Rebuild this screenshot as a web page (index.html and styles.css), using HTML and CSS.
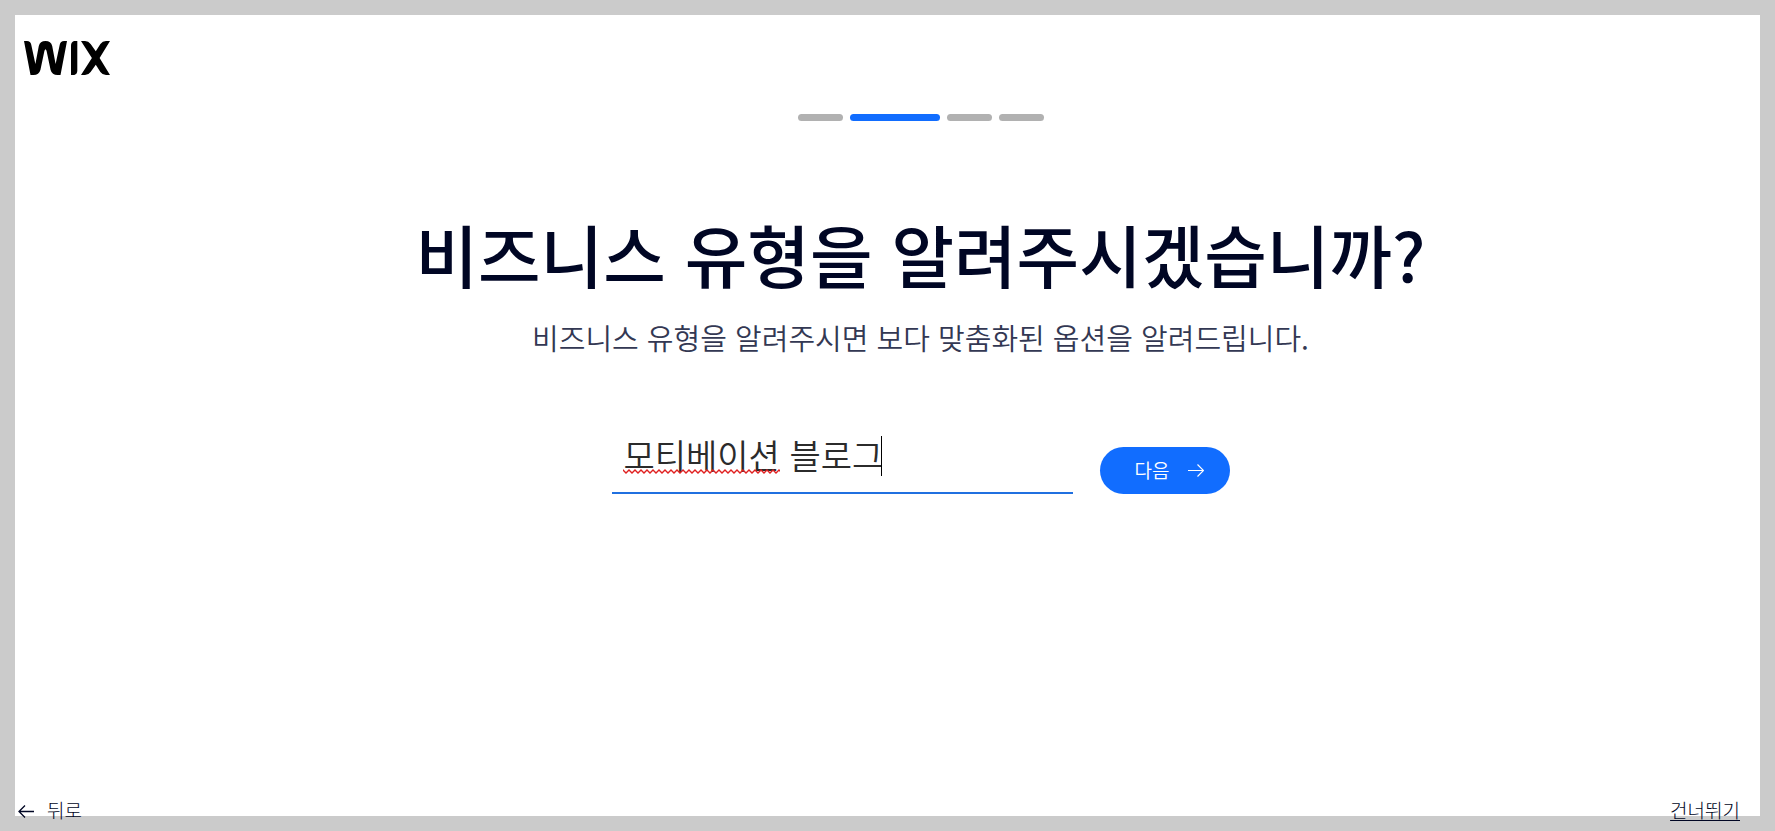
FILE: index.html
```html
<!DOCTYPE html>
<html lang="ko">
<head>
<meta charset="UTF-8">
<meta name="viewport" content="width=device-width, initial-scale=1.0">
<link rel="stylesheet" href="styles.css">
<title>Wix</title>
</head>
<body>

<div class="page">
  <header class="header">
    <a class="logo" href="#" aria-label="Wix">
      <svg width="86" height="34" viewBox="0 0 86 34" fill="#000">
        <path d="M0 0h3Q6.500 0 7.200 3.500L11.400 23 14.800 5Q16 0 21.500 0T28.200 5L31.600 23 35.800 3.500Q36.500 0 40 0H43L36.500 34h-3Q28 34 26.600 29L22.600 10Q21.500 6.500 20.400 10L16.400 29Q15 34 9.500 34H6.500z"/>
        <path d="M53.300 0v29.500q0 3.500-3 4.500H47V4.500q0-3.500 3-4.500z"/>
        <path d="M57 0h4q3.500 0 5.600 3L71.800 10.200 76.400 3Q78.500 0 82 0H86L75.600 17 86 34h-4q-3.500 0-5.600-3L71.800 23.800 66.600 31Q64.500 34 61 34H57L67.900 17z"/>
      </svg>
    </a>
  </header>

  <main class="content">
    <div class="steps">
      <span class="step"></span>
      <span class="step active"></span>
      <span class="step"></span>
      <span class="step"></span>
    </div>

    <h1>비즈니스 유형을 알려주시겠습니까?</h1>
    <p class="subtitle">비즈니스 유형을 알려주시면 보다 맞춤화된 옵션을 알려드립니다.</p>

    <form class="business-form">
      <div class="field">
        <input type="text" id="business" class="business-input" aria-label="비즈니스 유형" value="모티베이션 블로그" spellcheck="false">
        <svg class="spelling" width="157" height="5">
          <defs>
            <pattern id="wave" width="6" height="5" patternUnits="userSpaceOnUse">
              <path d="M-1 0L0 1 3 4 6 1 7 0" fill="none" stroke="#e02020" stroke-width="1.400"/>
            </pattern>
          </defs>
          <rect width="157" height="5" fill="url(#wave)"/>
        </svg>
        <span class="caret"></span>
      </div>
      <button type="button" class="next">
        다음
        <svg width="16" height="15" viewBox="0 0 16 15" fill="none" stroke="currentColor" stroke-width="1.200">
          <path d="M0 8.500h15.500M9.500 2.500l6 6-6 6"/>
        </svg>
      </button>
    </form>
  </main>
</div>

<footer class="footer">
  <a class="back" href="#">
    <svg width="16" height="15" viewBox="0 0 16 15" fill="none" stroke="currentColor" stroke-width="1.300">
      <path d="M16 8.500H1M7 2.500l-6 6 6 6"/>
    </svg>
    뒤로
  </a>
  <a class="skip" href="#">건너뛰기</a>
</footer>

</body>
</html>
```
FILE: styles.css
```css
* {
  box-sizing: border-box;
}
body {
  margin: 0;
  min-height: 100vh;
  display: grid;
  padding: 15px;
  background-color: #cbcbcb;
  color: #000624;
  font-family: "Noto Sans CJK KR", sans-serif;
  font-weight: 350;
}
.page {
  grid-area: 1 / 1;
  background-color: #fff;
}
.header {
  padding: 26px 9px 0;
}
.logo {
  display: block;
}
.logo svg {
  display: block;
}
.content {
  display: flex;
  flex-direction: column;
  align-items: center;
  padding: 39px 0 0 66px;
}
.steps {
  display: flex;
  gap: 7px;
}
.step {
  width: 45px;
  height: 7px;
  border-radius: 4px;
  background-color: #b1b1b1;
}
.step.active {
  width: 90px;
  background-color: #116dff;
}
h1 {
  margin: 83px 0 0;
  font-size: 68px;
  line-height: 100px;
  font-weight: 500;
}
.subtitle {
  margin: 11px 0 0;
  font-size: 29px;
  line-height: 44px;
  color: #333853;
}
.business-form {
  display: flex;
  align-items: flex-end;
  gap: 27px;
  margin-top: 69px;
}
.field {
  position: relative;
}
.business-input {
  display: block;
  width: 461px;
  height: 66px;
  padding: 0 12px 12px;
  border: none;
  border-bottom: 2px solid #2070e0;
  outline: none;
  background: none;
  color: #2b2b2b;
  font-family: inherit;
  font-size: 34px;
  font-weight: 350;
}
.spelling {
  position: absolute;
  left: 11px;
  top: 41px;
}
.caret {
  position: absolute;
  left: 269px;
  top: 8px;
  width: 1px;
  height: 40px;
  background-color: #000;
}
.next {
  display: flex;
  align-items: center;
  justify-content: center;
  gap: 19px;
  width: 130px;
  height: 47px;
  padding: 0 0 2px 10px;
  border: none;
  border-radius: 24px;
  background-color: #116dff;
  color: #fff;
  font-family: inherit;
  font-size: 19px;
  font-weight: 350;
  cursor: pointer;
}
.footer {
  grid-area: 1 / 1;
  align-self: end;
  display: flex;
  justify-content: space-between;
  align-items: center;
  margin-bottom: -7px;
  padding: 0 20px 0 3px;
  font-size: 19px;
  font-weight: 300;
  line-height: 26px;
}
.footer a {
  color: #000624;
}
.back {
  display: flex;
  align-items: center;
  gap: 13px;
  text-decoration: none;
}
.skip {
  text-underline-offset: 2px;
}
```
